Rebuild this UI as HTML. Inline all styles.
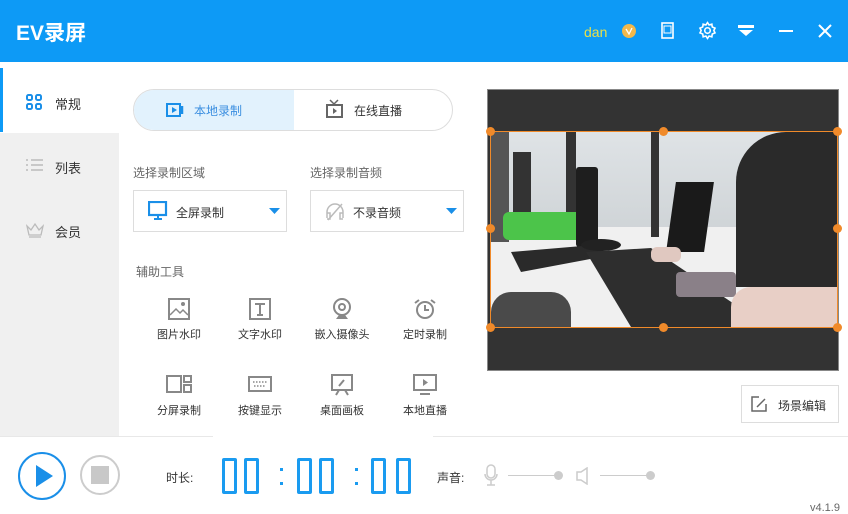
<!DOCTYPE html>
<html><head><meta charset="utf-8"><style>
*{margin:0;padding:0;box-sizing:border-box}
body{width:848px;height:513px;overflow:hidden;background:#fff;font-family:"Liberation Sans","Noto Sans CJK SC",sans-serif;position:relative;color:#333}
.a{position:absolute}
.hdr{left:0;top:0;width:848px;height:62px;background:#0d9af6}
.t{font-size:12px;white-space:nowrap}
.tool{width:70px;text-align:center;font-size:11px;color:#333}
.tool svg{display:block;margin:0 auto 6px;height:22px}
.dig{position:absolute;width:15px;height:36px;border:3px solid #1a9bf0;border-radius:2px}
</style></head><body>
<div class="a hdr"></div>
<div class="a" style="left:16px;top:17px;color:#fff;font-size:21px;font-weight:bold">EV录屏</div>
<div class="a t" style="left:584px;top:24px;color:#e8e04a;font-size:14px">dan</div>
<div class="a" style="left:622px;top:24px;width:14px;height:14px;border-radius:50%;background:#f2b84b"></div>
<svg class="a" style="left:624px;top:26px" width="10" height="10"><path d="M2 3l3 5 3-6" fill="none" stroke="#fff" stroke-width="1.3"/></svg>
<svg class="a" style="left:660px;top:22px" width="16" height="18"><rect x="2" y="1" width="11" height="15" fill="none" stroke="#fff" stroke-width="1.6"/><rect x="4" y="4" width="7" height="7" fill="none" stroke="#fff" stroke-width="1"/></svg>
<svg class="a" style="left:698px;top:21px" width="19" height="19" viewBox="0 0 24 24"><path d="M12 2l2 3 3.5-1 .5 3.5 3.5 1.5-1.5 3 1.5 3-3.5 1.5-.5 3.5-3.5-1-2 3-2-3-3.5 1-.5-3.5L2.5 15 4 12 2.5 9 6 7.5 6.5 4 10 5z" fill="none" stroke="#fff" stroke-width="2"/><circle cx="12" cy="12" r="3.5" fill="none" stroke="#fff" stroke-width="2"/></svg>
<svg class="a" style="left:738px;top:25px" width="16" height="12"><rect x="0" y="0" width="16" height="3" fill="#fff"/><path d="M1 5h14l-7 6z" fill="#fff"/></svg>
<div class="a" style="left:779px;top:30px;width:14px;height:2px;background:#fff"></div>
<svg class="a" style="left:818px;top:24px" width="14" height="14"><path d="M1 1L13 13M13 1L1 13" stroke="#fff" stroke-width="2"/></svg>

<div class="a" style="left:0;top:133px;width:119px;height:303px;background:#f0f0f0"></div>
<div class="a" style="left:0;top:68px;width:3px;height:64px;background:#0d9af6"></div>
<svg class="a" style="left:26px;top:94px" width="17" height="17"><g fill="none" stroke="#1a8fe8" stroke-width="2"><rect x="1" y="1" width="5" height="5" rx="1.5"/><rect x="10" y="1" width="5" height="5" rx="1.5"/><rect x="1" y="10" width="5" height="5" rx="1.5"/><rect x="10" y="10" width="5" height="5" rx="1.5"/></g></svg>
<div class="a t" style="left:55px;top:94px;font-size:13px">常规</div>
<svg class="a" style="left:26px;top:158px" width="17" height="14"><g stroke="#bbb" stroke-width="1.5"><path d="M0 2h2M5 2h12M0 7h2M5 7h12M0 12h2M5 12h12"/></g></svg>
<div class="a t" style="left:55px;top:158px;font-size:13px">列表</div>
<svg class="a" style="left:26px;top:222px" width="18" height="16"><path d="M1 4l4 4 4-6 4 6 4-4-2 9H3z" fill="none" stroke="#bbb" stroke-width="1.3"/><path d="M3 15h12" stroke="#bbb" stroke-width="1.3"/></svg>
<div class="a t" style="left:55px;top:222px;font-size:13px">会员</div>

<div class="a" style="left:133px;top:89px;width:320px;height:42px;border:1px solid #ddd;border-radius:21px;overflow:hidden;background:#fff"><div style="width:160px;height:42px;background:#e2f2fd"></div></div>
<svg class="a" style="left:166px;top:102px" width="20" height="16"><rect x="1" y="2" width="13" height="12" fill="none" stroke="#1a8fe8" stroke-width="2"/><path d="M6 5v6l5-3z" fill="#1a8fe8"/><path d="M16 4v8" stroke="#1a8fe8" stroke-width="2.5"/></svg>
<div class="a t" style="left:194px;top:102px;color:#3a8ee0">本地录制</div>
<svg class="a" style="left:325px;top:99px" width="20" height="20"><path d="M5 1l4 4 4-4" fill="none" stroke="#666" stroke-width="1.5"/><rect x="2" y="6" width="15" height="12" fill="none" stroke="#666" stroke-width="2"/><path d="M8 9v6l4-3z" fill="#666"/></svg>
<div class="a t" style="left:354px;top:102px">在线直播</div>

<div class="a t" style="left:133px;top:164px;color:#666">选择录制区域</div>
<div class="a t" style="left:310px;top:164px;color:#666">选择录制音频</div>
<div class="a" style="left:133px;top:190px;width:154px;height:42px;border:1px solid #ddd"></div>
<div class="a" style="left:310px;top:190px;width:154px;height:42px;border:1px solid #ddd"></div>
<svg class="a" style="left:148px;top:201px" width="20" height="20"><rect x="1" y="1" width="17" height="13" fill="none" stroke="#1a8fe8" stroke-width="2.2"/><path d="M6 18h8M10 14v4" stroke="#1a8fe8" stroke-width="2"/></svg>
<div class="a t" style="left:176px;top:204px">全屏录制</div>
<svg class="a" style="left:269px;top:208px" width="11" height="7"><path d="M0 0h11L5.5 6z" fill="#1a8fe8"/></svg>
<svg class="a" style="left:325px;top:200px" width="20" height="22"><path d="M2 18v-6a8 8 0 0 1 16 0v6M2 13h3v6H2M18 13h-3v6h3M3 20L17 4" fill="none" stroke="#bbb" stroke-width="1.5"/></svg>
<div class="a t" style="left:353px;top:204px">不录音频</div>
<svg class="a" style="left:446px;top:208px" width="11" height="7"><path d="M0 0h11L5.5 6z" fill="#1a8fe8"/></svg>

<div class="a t" style="left:136px;top:263px;color:#666">辅助工具</div>
<div class="a tool" style="left:144px;top:298px"><svg width="22" height="22"><rect x="1" y="1" width="20" height="20" fill="none" stroke="#888" stroke-width="2"/><path d="M2 17l6-6 4 4 3-3 5 5" fill="none" stroke="#888" stroke-width="1.5"/><circle cx="15" cy="6" r="2" fill="#888"/></svg>图片水印</div>
<div class="a tool" style="left:225px;top:298px"><svg width="22" height="22"><rect x="1" y="1" width="20" height="20" fill="none" stroke="#888" stroke-width="2"/><path d="M6 6h10M11 6v11M8 17h6" stroke="#888" stroke-width="2"/></svg>文字水印</div>
<div class="a tool" style="left:307px;top:298px"><svg width="22" height="22"><circle cx="11" cy="9" r="8" fill="none" stroke="#888" stroke-width="2"/><circle cx="11" cy="9" r="3" fill="none" stroke="#888" stroke-width="2"/><path d="M5 21h12l-3-4H8z" fill="#888"/></svg>嵌入摄像头</div>
<div class="a tool" style="left:390px;top:298px"><svg width="24" height="22"><circle cx="12" cy="12" r="8" fill="none" stroke="#888" stroke-width="2"/><path d="M12 7v5h4M2 5l4-3M22 5l-4-3" fill="none" stroke="#888" stroke-width="2"/></svg>定时录制</div>
<div class="a tool" style="left:144px;top:374px"><svg width="26" height="22"><rect x="1" y="2" width="14" height="16" fill="none" stroke="#888" stroke-width="2"/><rect x="18" y="2" width="7" height="6" fill="none" stroke="#888" stroke-width="2"/><rect x="18" y="11" width="7" height="7" fill="none" stroke="#888" stroke-width="2"/></svg>分屏录制</div>
<div class="a tool" style="left:225px;top:374px"><svg width="24" height="22"><rect x="1" y="3" width="22" height="14" fill="none" stroke="#888" stroke-width="2"/><path d="M5 8h14M6 12h12" stroke="#888" stroke-width="1.5" stroke-dasharray="1.5 1.5"/></svg>按键显示</div>
<div class="a tool" style="left:307px;top:374px"><svg width="24" height="22"><rect x="2" y="1" width="20" height="15" fill="none" stroke="#888" stroke-width="2"/><path d="M9 12l5-6M6 21l3-5M18 21l-3-5" stroke="#888" stroke-width="2"/></svg>桌面画板</div>
<div class="a tool" style="left:390px;top:374px"><svg width="24" height="22"><rect x="1" y="1" width="22" height="15" fill="none" stroke="#888" stroke-width="2"/><path d="M10 5v7l5-3.5z" fill="#888"/><path d="M7 20h10" stroke="#888" stroke-width="2"/></svg>本地直播</div>

<div class="a" style="left:487px;top:89px;width:352px;height:282px;background:#333;border:1px solid #888"></div>
<div class="a" style="left:491px;top:132px;width:346px;height:195px;overflow:hidden;background:linear-gradient(180deg,#dfe3e6 0%,#cfd4d7 50%,#eeeeee 62%,#f2f2f2 100%)">
 <div class="a" style="left:0;top:95px;width:346px;height:100px;background:#f0f0f0"></div>
 <div class="a" style="left:0;top:0;width:18px;height:110px;background:#555"></div>
 <div class="a" style="left:22px;top:20px;width:18px;height:80px;background:#333"></div>
 <div class="a" style="left:75px;top:0;width:10px;height:90px;background:#333"></div>
 <div class="a" style="left:160px;top:0;width:8px;height:105px;background:#333"></div>
 <div class="a" style="left:12px;top:80px;width:80px;height:28px;background:#4cc44a;border-radius:6px"></div>
 <div class="a" style="left:85px;top:35px;width:22px;height:80px;background:#1e1e1e;border-radius:3px"></div>
 <div class="a" style="left:180px;top:50px;width:38px;height:70px;background:#1a1a1a;transform:skewX(-8deg)"></div>
 <svg class="a" style="left:0;top:0" width="346" height="195"><polygon points="20,120 115,112 110,125 30,140" fill="#2a2a2a"/><polygon points="95,120 160,116 270,190 275,195 140,195" fill="#2e2e2e"/><ellipse cx="110" cy="113" rx="20" ry="6" fill="#222"/></svg>
 <div class="a" style="left:0;top:160px;width:80px;height:40px;background:#4a4a4a;border-radius:20px 20px 0 0"></div>
 <div class="a" style="left:245px;top:0;width:105px;height:155px;background:#2a2a2a;border-radius:50px 0 0 0"></div>
 <div class="a" style="left:160px;top:115px;width:30px;height:15px;background:#e0c8c0;border-radius:6px"></div>
 <div class="a" style="left:185px;top:140px;width:60px;height:25px;background:#8a8088;border-radius:4px"></div>
 <div class="a" style="left:240px;top:155px;width:110px;height:45px;background:#e8cfc6;border-radius:20px 0 0 0"></div>
</div>
<div class="a" style="left:490px;top:131px;width:348px;height:197px;border:1px solid #f08a2a"></div>
<div class="a" style="left:486px;top:127px;width:9px;height:9px;border-radius:50%;background:#f08a2a"></div>
<div class="a" style="left:659px;top:127px;width:9px;height:9px;border-radius:50%;background:#f08a2a"></div>
<div class="a" style="left:833px;top:127px;width:9px;height:9px;border-radius:50%;background:#f08a2a"></div>
<div class="a" style="left:486px;top:224px;width:9px;height:9px;border-radius:50%;background:#f08a2a"></div>
<div class="a" style="left:833px;top:224px;width:9px;height:9px;border-radius:50%;background:#f08a2a"></div>
<div class="a" style="left:486px;top:323px;width:9px;height:9px;border-radius:50%;background:#f08a2a"></div>
<div class="a" style="left:659px;top:323px;width:9px;height:9px;border-radius:50%;background:#f08a2a"></div>
<div class="a" style="left:833px;top:323px;width:9px;height:9px;border-radius:50%;background:#f08a2a"></div>

<div class="a" style="left:741px;top:385px;width:98px;height:38px;border:1px solid #ddd"></div>
<svg class="a" style="left:751px;top:396px" width="16" height="16"><path d="M8 1H1v14h14V8M6 11l8-8" fill="none" stroke="#666" stroke-width="1.5"/></svg>
<div class="a t" style="left:778px;top:397px">场景编辑</div>

<div class="a" style="left:0;top:436px;width:848px;height:1px;background:#e8e8e8"></div>
<div class="a" style="left:213px;top:435px;width:220px;height:3px;background:#fff"></div>
<div class="a" style="left:18px;top:452px;width:48px;height:48px;border:2px solid #1a8fe8;border-radius:50%"></div>
<svg class="a" style="left:35px;top:464px" width="20" height="24"><path d="M1 1l17 11-17 11z" fill="#1a8fe8"/></svg>
<div class="a" style="left:80px;top:455px;width:40px;height:40px;border:2px solid #ccc;border-radius:50%"></div>
<div class="a" style="left:91px;top:466px;width:18px;height:18px;background:#c8c8c8"></div>
<div class="a t" style="left:166px;top:469px">时长:</div>
<div class="dig" style="left:222px;top:458px"></div><div class="dig" style="left:244px;top:458px"></div>
<div class="a" style="left:280px;top:468px;width:3px;height:3px;background:#1a9bf0"></div><div class="a" style="left:280px;top:482px;width:3px;height:3px;background:#1a9bf0"></div>
<div class="dig" style="left:297px;top:458px"></div><div class="dig" style="left:319px;top:458px"></div>
<div class="a" style="left:355px;top:468px;width:3px;height:3px;background:#1a9bf0"></div><div class="a" style="left:355px;top:482px;width:3px;height:3px;background:#1a9bf0"></div>
<div class="dig" style="left:371px;top:458px"></div><div class="dig" style="left:396px;top:458px"></div>
<div class="a t" style="left:437px;top:469px">声音:</div>
<svg class="a" style="left:484px;top:464px" width="14" height="22"><rect x="3" y="1" width="8" height="13" rx="4" fill="none" stroke="#ccc" stroke-width="1.5"/><path d="M1 10a6 6 0 0 0 12 0M7 16v5M3 21h8" fill="none" stroke="#ccc" stroke-width="1.5"/></svg>
<div class="a" style="left:508px;top:475px;width:50px;height:1px;background:#ccc"></div>
<div class="a" style="left:554px;top:471px;width:9px;height:9px;border-radius:50%;background:#ccc"></div>
<svg class="a" style="left:576px;top:467px" width="16" height="18"><path d="M1 5h4l6-4v16l-6-4H1z" fill="none" stroke="#ccc" stroke-width="1.5"/></svg>
<div class="a" style="left:600px;top:475px;width:50px;height:1px;background:#ccc"></div>
<div class="a" style="left:646px;top:471px;width:9px;height:9px;border-radius:50%;background:#ccc"></div>
<div class="a t" style="left:810px;top:502px;font-size:11px;color:#666">v4.1.9</div>
</body></html>
